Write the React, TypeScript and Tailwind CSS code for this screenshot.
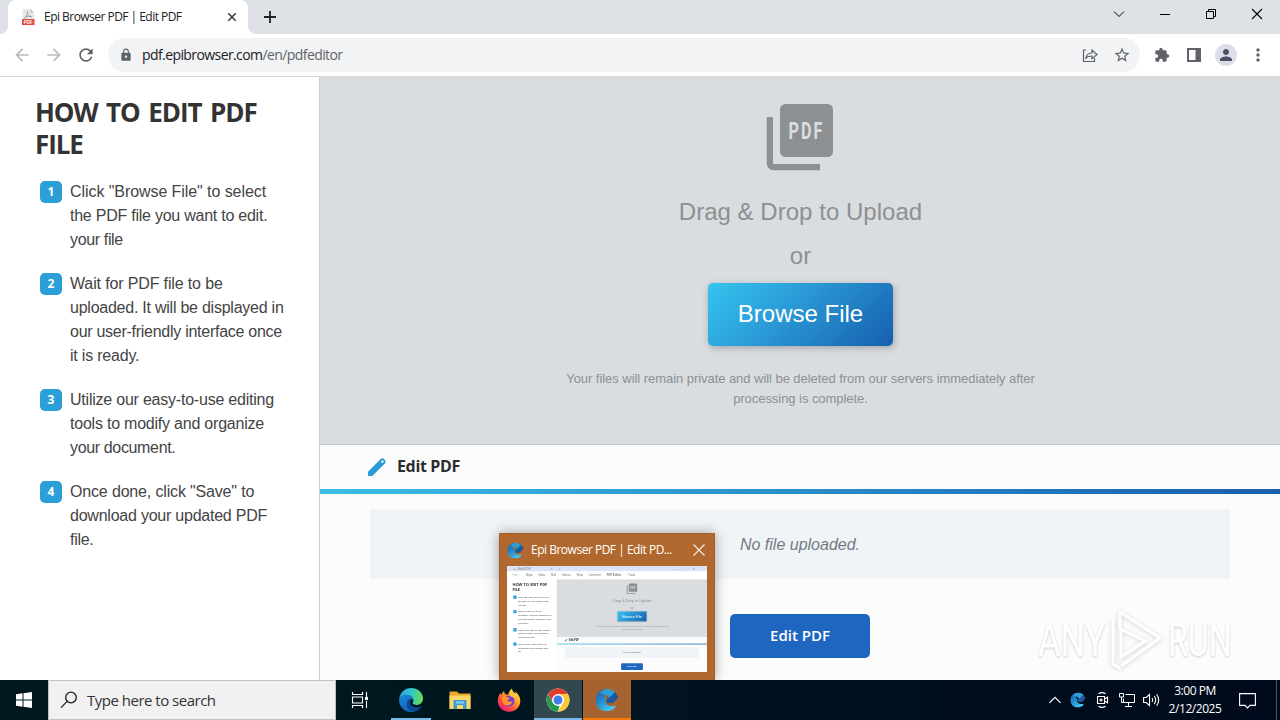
import { useId } from 'react';
import type { ReactNode } from 'react';
import clsx from 'clsx';
import {
  MdArrowBack,
  MdArrowForward,
  MdExtension,
  MdLock,
  MdMoreVert,
  MdPerson,
  MdRefresh,
  MdStarBorder,
} from 'react-icons/md';

interface StepLine {
  text: string;
  tracking: string;
}

const steps: StepLine[][] = [
  [
    { text: 'Click "Browse File" to select', tracking: 'tracking-[-0.07px]' },
    { text: 'the PDF file you want to edit.', tracking: 'tracking-[-0.24px]' },
    { text: 'your file', tracking: 'tracking-[-0.35px]' },
  ],
  [
    { text: 'Wait for PDF file to be', tracking: 'tracking-[-0.14px]' },
    { text: 'uploaded. It will be displayed in', tracking: 'tracking-[-0.24px]' },
    { text: 'our user-friendly interface once', tracking: 'tracking-[-0.27px]' },
    { text: 'it is ready.', tracking: 'tracking-[-0.2px]' },
  ],
  [
    { text: 'Utilize our easy-to-use editing', tracking: 'tracking-[-0.22px]' },
    { text: 'tools to modify and organize', tracking: 'tracking-[-0.22px]' },
    { text: 'your document.', tracking: 'tracking-[-0.35px]' },
  ],
  [
    { text: 'Once done, click "Save" to', tracking: 'tracking-[-0.16px]' },
    { text: 'download your updated PDF', tracking: 'tracking-[-0.23px]' },
    { text: 'file.', tracking: 'tracking-[-0.3px]' },
  ],
];

export default function App() {
  return (
    <div className="relative flex h-[720px] w-[1280px] flex-col overflow-hidden bg-white">
      <TabStrip />
      <Toolbar />
      <div className="h-[603px] shrink-0">
        <PdfEditorPage />
      </div>
      <Taskbar />
      <Watermark />
      <TaskPreview />
    </div>
  );
}

function TabStrip() {
  return (
    <div className="flex h-[34px] shrink-0 items-stretch bg-[#dee1e6] font-['Open_Sans','Noto_Sans',sans-serif] text-[#202124]">
      <div className="flex w-2 items-end overflow-hidden bg-white">
        <div className="h-full w-2 rounded-br-lg bg-[#dee1e6]" />
      </div>
      <div className="bg-white">
        <div className="h-2 w-full bg-[#dee1e6]">
          <div className="h-2 rounded-t-lg bg-white" />
        </div>
        <div className="-mt-2 flex h-[34px] w-[240px] items-center pr-[10px] pl-3">
          <PdfFileIcon />
          <span className="ml-2 flex-1 text-[12px] tracking-[-0.53px] whitespace-nowrap">Epi Browser PDF | Edit PDF</span>
          <svg width="12" height="12" viewBox="0 0 12 12" stroke="#3c4043" strokeWidth="1.6">
            <path d="M2.3 2.3l7.4 7.4M9.7 2.3L2.3 9.7" />
          </svg>
        </div>
      </div>
      <div className="w-2 bg-white">
        <div className="h-full w-2 rounded-bl-lg bg-[#dee1e6]" />
      </div>
      <svg className="mt-[10px] ml-[7px]" width="14" height="14" viewBox="0 0 14 14" stroke="#202124" strokeWidth="1.8">
        <path d="M7 1v12M1 7h12" />
      </svg>
      <div className="ml-auto flex items-center text-black">
        <svg width="46" height="28" viewBox="0 0 46 28" fill="none" stroke="currentColor">
          <path d="M18 8.500l5 5 5-5" />
        </svg>
        <svg width="46" height="28" viewBox="0 0 46 28" fill="none" stroke="currentColor">
          <path d="M18 11.5h10" />
        </svg>
        <svg width="46" height="28" viewBox="0 0 46 28" fill="none" stroke="currentColor">
          <path d="M18.500 8.500h7v7h-7zM20.500 8.500v-2h7v7h-2" />
        </svg>
        <svg width="46" height="28" viewBox="0 0 46 28" fill="none" stroke="currentColor" strokeWidth="1.1">
          <path d="M18 6l10 10M28 6L18 16" />
        </svg>
      </div>
    </div>
  );
}

function PdfFileIcon() {
  return (
    <svg width="16" height="16" viewBox="0 0 16 16">
      <path d="M2.500 0h8L14 3.500V16h-11.500z" fill="#e6e7e8" />
      <path d="M10.500 0v3.500H14z" fill="#c2c5c8" />
      <path d="M4.500 9c2-1 3.800-4.500 3-6.500-1 1 1 5.500 4.500 5.200-2-1-5.500 0-7.500 1.300z" fill="none" stroke="#9a9da0" strokeWidth=".9" />
      <rect x="2" y="10" width="12.500" height="6" fill="#e2483d" />
      <text x="8.300" y="14.700" fontSize="4.500" fontWeight="700" textAnchor="middle" fill="#fff" fontFamily="Liberation Sans">
        PDF
      </text>
    </svg>
  );
}

function Toolbar() {
  return (
    <div className="flex h-[43px] shrink-0 items-center border-b border-[#d5d8db] bg-white pl-[12px] text-[#5f6368]">
      <MdArrowBack size={20} className="text-[#b9bbbe]" />
      <MdArrowForward size={20} className="ml-3 text-[#b9bbbe]" />
      <MdRefresh size={20} className="ml-3" />
      <div className="ml-3 flex h-[34px] w-[1032px] items-center rounded-full bg-[#f1f3f4] pr-[10px] pl-[11px]">
        <MdLock size={14} />
        <span className="ml-[9px] pb-px font-['Open_Sans','Noto_Sans',sans-serif] text-[14px] tracking-[-0.59px] whitespace-nowrap text-[#5f6368]">
          <span className="text-[#202124]">pdf.epibrowser.com</span>/en/pdfeditor
        </span>
        <svg className="ml-auto" width="16" height="16" viewBox="0 0 16 16" fill="none" stroke="#5f6368" strokeWidth="1.200">
          <path d="M4 3H1.500v11.500h11V11M4 11c.5-3.500 2.500-5 6-5V3l5 4.500-5 4.200V9C7.500 9 5.500 9.500 4 11z" />
        </svg>
        <MdStarBorder size={18} className="-mr-[1px] ml-[15px]" />
      </div>
      <MdExtension size={16} className="mr-px ml-[14px]" />
      <svg className="ml-[15px]" width="16" height="16" viewBox="0 0 16 16">
        <path d="M1 1h14v14H1zM3 3v10h6.500V3z" fill="#5f6368" fillRule="evenodd" />
      </svg>
      <div className="ml-[13px] flex size-[22px] items-center justify-center rounded-full bg-[#dcdfe8] text-[#4b5065]">
        <MdPerson size={18} />
      </div>
      <MdMoreVert size={20} className="ml-[11px]" />
    </div>
  );
}

function PdfStackIcon() {
  return (
    <svg width="80" height="80" viewBox="0 0 80 80" fill="currentColor">
      <path d="M6.700 20H13v47h47v6.300H13.400a6.700 6.700 0 0 1-6.700-6.700z" />
      <rect x="20" y="7" width="53" height="53" rx="5.500" />
      <text
        x="28.500"
        y="42"
        fontSize="24"
        fontWeight="700"
        fontFamily="Roboto, 'Liberation Sans', sans-serif"
        textLength="36"
        lengthAdjust="spacingAndGlyphs"
        letterSpacing="3"
        fill="#d9dde0"
      >
        PDF
      </text>
    </svg>
  );
}

function PdfEditorPage() {
  return (
    <div className="flex h-[603px] w-[1280px] overflow-hidden bg-[#fcfcfd]">
      <aside className="w-[320px] shrink-0 border-r border-[#c9cdd0] bg-white pt-[19px] pl-[35px]">
        <h1 className="font-['Open_Sans','Noto_Sans',sans-serif] text-[26px] leading-[32px] font-bold tracking-[-1.1px] [word-spacing:3px] whitespace-nowrap text-[#333]">
          HOW TO EDIT PDF
          <br />
          FILE
        </h1>
        <ol className="mt-[19px] ml-[5px] space-y-5">
          {steps.map((lines, i) => (
            <li key={i} className="flex">
              <span className="mt-[2px] flex size-[22px] shrink-0 items-center justify-center rounded-[5px] bg-[#2a9fd8] pb-px font-['Open_Sans','Noto_Sans',sans-serif] text-[12px] font-bold text-white">
                {i + 1}
              </span>
              <p className="-mb-px ml-2 pt-px font-['Liberation_Sans',Arial,sans-serif] text-[16px] leading-6 whitespace-nowrap text-[#444]">
                {lines.map(line => (
                  <span key={line.text} className={clsx('block', line.tracking)}>
                    {line.text}
                  </span>
                ))}
              </p>
            </li>
          ))}
        </ol>
      </aside>

      <main className="flex flex-1 flex-col font-['Liberation_Sans',Arial,sans-serif]">
        <section className="flex h-[368px] shrink-0 flex-col items-center border-b border-[#c5cacf] bg-[#d9dde0] pt-[20px] text-[#8c9093]">
          <PdfStackIcon />
          <div className="mt-[21px] pl-px text-[24px] leading-7 tracking-[0.03px]">Drag &amp; Drop to Upload</div>
          <div className="mt-4 pl-px text-[24px] leading-7">or</div>
          <button className="mt-[13px] h-[63px] w-[185px] rounded-[5px] bg-linear-[135deg,#35c5ef,#2a97d4_45%,#165fae] pb-[2px] pl-px text-[24px] text-white shadow-[1px_2px_7px_rgba(0,0,0,0.25)]">
            Browse File
          </button>
          <p className="mt-[23px] pl-px text-center text-[13px] leading-5 tracking-[-0.05px] whitespace-nowrap">
            Your files will remain private and will be deleted from our servers immediately after
            <br />
            processing is complete.
          </p>
        </section>

        <div className="flex h-[44px] shrink-0 items-center pl-[47px] text-[#2b2b2b]">
          <svg width="20" height="20" viewBox="0 0 20 20">
            <path d="M1 19v-4.200L13.500 2.200q1.700-1.700 3.400-.2l1 1q1.700 1.700 0 3.400L5.300 19z" fill="#2a9bd7" />
            <circle cx="15.400" cy="4.600" r="1.200" fill="#fff" />
          </svg>
          <span className="ml-[10px] pb-[2px] font-['Open_Sans','Noto_Sans',sans-serif] text-[16px] font-bold tracking-[-0.35px]">Edit PDF</span>
        </div>
        <div className="h-[5px] shrink-0 bg-linear-to-r from-[#3bbde6] to-[#1b5fab]" />

        <div className="mx-[50px] mt-[15px] flex h-[70px] items-center justify-center bg-[#f1f4f7] pt-[2px] text-[16px] text-[#6f7a84] italic">
          No file uploaded.
        </div>
        <button className="mx-auto mt-[35px] h-[44px] w-[140px] rounded-[5px] bg-[#1f66c1] pb-[2px] font-['Open_Sans','Noto_Sans',sans-serif] text-[15px] font-semibold text-white">
          Edit PDF
        </button>
      </main>
    </div>
  );
}

function TaskPreview() {
  return (
    <div className="absolute top-[533px] left-[499px] h-[147px] w-[216px] border border-b-0 border-[#a25e28] bg-[#b0682e] shadow-[0_0_12px_rgba(0,0,0,0.35)] [clip-path:inset(-20px_-20px_0_-20px)]">
      <div className="flex h-8 items-center pr-[9px] pl-[7px]">
        <EpiLogo size={17} />
        <span className="ml-[7px] flex-1 font-['Open_Sans','Noto_Sans',sans-serif] text-[12px] tracking-[-0.49px] whitespace-nowrap text-white">
          Epi Browser PDF | Edit PD...
        </span>
        <svg width="12" height="12" viewBox="0 0 12 12" stroke="#f6e9df" strokeWidth="1.200">
          <path d="M.5.5l11 11M11.500.5l-11 11" />
        </svg>
      </div>
      <div className="ml-[7px] h-[106px] w-[200px] overflow-hidden bg-white">
        <div className="h-[680px] w-[1280px] origin-top-left scale-[0.15625]">
          <div className="flex h-[34px] items-center bg-[#dbe4f7] px-10 font-['Liberation_Sans',Arial,sans-serif] text-[20px] text-[#777]">
            <PdfFileIcon />
            <span className="ml-4">Edit PDF</span>
            <span className="ml-32">×</span>
            <span className="ml-10">+</span>
            <span className="ml-auto tracking-[40px]">–□×</span>
          </div>
          <div className="flex h-[51px] items-center gap-9 bg-white px-8 font-['Liberation_Sans',Arial,sans-serif] text-[18px] text-[#777]">
            <span>‹ › ↻ ⌂</span>
            <span>Maps</span>
            <span>News</span>
            <span>Mail</span>
            <span>Games</span>
            <span>Shop</span>
            <span>Converter</span>
            <span className="font-bold">PDF Editor</span>
            <span>• Tools</span>
          </div>
          <PdfEditorPage />
        </div>
      </div>
    </div>
  );
}

function Watermark() {
  return (
    <div className="absolute top-[606px] left-[1038px] flex h-[68px] items-center font-[Roboto,'Liberation_Sans',sans-serif] text-[46px] text-white [text-shadow:0_1px_3px_rgba(0,0,0,0.2)]">
      <span className="w-[68px] origin-left scale-x-[0.75]">ANY</span>
      <svg className="drop-shadow-[0_1px_2px_rgba(0,0,0,0.17)]" width="60" height="68" viewBox="0 0 60 68" fill="none" stroke="#fff" strokeWidth="3" strokeLinejoin="round">
        <path d="M14 6L54 32 15 60M14 6v17L39 35 15 51V23M7 13v45l8 5" />
      </svg>
      <span className="ml-[2px] w-[70px] origin-left scale-x-[0.7]">RUN</span>
    </div>
  );
}

function TaskButton({ active, underline, className, children }: { active?: boolean; underline?: string; className?: string; children: ReactNode }) {
  return (
    <div className={clsx('mr-px flex h-10 w-12 flex-col items-center', className)}>
      <div className="flex h-[38px] items-center pt-[2px]">{children}</div>
      {underline && <div className={clsx('h-[2px]', active ? 'w-full' : 'w-10', underline)} />}
    </div>
  );
}

function Taskbar() {
  return (
    <div className="flex h-10 shrink-0 bg-linear-to-r from-[#00171f] from-30% to-[#010a1c] font-['Open_Sans','Noto_Sans',sans-serif]">
      <div className="flex w-12 items-center justify-center">
        <svg width="16" height="16" viewBox="0 0 16 16" fill="#fff">
          <path d="M0 2.200L6.500 1.300V7.500H0zM7.500 1.200L16 0v7.500H7.500zM0 8.500h6.500v6.200L0 13.800zM7.500 8.500H16V16l-8.500-1.200z" />
        </svg>
      </div>
      <div className="flex w-[288px] items-center border border-[#bfc1c2] bg-[#f1f1f1] pl-[11px] text-[#333]">
        <svg width="18" height="18" viewBox="0 0 18 18" fill="none" stroke="#202020" strokeWidth="1.300">
          <circle cx="11" cy="6.500" r="5.300" />
          <path d="M7.200 10.400L1 16.600" />
        </svg>
        <span className="ml-[9px] text-[15px] tracking-[-0.5px]">Type here to search</span>
      </div>
      <TaskButton>
        <svg width="18" height="18" viewBox="0 0 18 18" fill="none" stroke="#fff" strokeWidth="1.100">
          <path d="M1.500 1v2.500h10V1M1.500 6h10v6h-10zM1.500 17v-2.500h10V17M15.500 1v5M15.500 10v7" />
          <rect x="14.500" y="6.500" width="2" height="2" fill="#fff" />
        </svg>
      </TaskButton>
      <div className="ml-[2px] flex">
        <TaskButton underline="bg-[#76b9ed]">
          <EdgeLogo />
        </TaskButton>
        <TaskButton>
          <FolderIcon />
        </TaskButton>
        <TaskButton>
          <FirefoxLogo />
        </TaskButton>
        <TaskButton active underline="bg-[#76b9ed]" className="bg-[#33474f]">
          <ChromeLogo />
        </TaskButton>
        <TaskButton active underline="bg-[#ff7600]" className="bg-[#a6632f]">
          <EpiLogo size={24} />
        </TaskButton>
      </div>
      <div className="ml-auto flex items-center text-white">
        <svg width="12" height="8" viewBox="0 0 12 8" fill="none" stroke="currentColor" strokeWidth="1.200">
          <path d="M.5 6.800L6 1.300l5.500 5.500" />
        </svg>
        <span className="ml-[9px]">
          <EpiLogo size={16} />
        </span>
        <svg className="ml-[10px]" width="14" height="18" viewBox="0 0 14 18" fill="none" stroke="currentColor" strokeWidth="1.100">
          <path d="M2.500 2.800Q6 .5 9.500 2.800M2.500 15.200Q6 17.500 9.500 15.200M1.500 5.500h7v7h-7zM8.500 8l3-1.800v5.600l-3-1.800" />
          <circle cx="5" cy="9" r="1" />
        </svg>
        <svg className="ml-[9px]" width="17" height="16" viewBox="0 0 17 16" fill="none" stroke="currentColor">
          <path d="M6.500 2.500h9v8h-11v-4M9.500 10.500v4M6 14.500h7M.5 1.500h4v3.500h-4zM2.500 5v5.500h2" />
        </svg>
        <svg className="ml-[7px]" width="17" height="16" viewBox="0 0 17 16" fill="none" stroke="currentColor" strokeWidth="1.100">
          <path d="M.6 5.500h2.500L6.500 2.500v11L3.100 10.500H.6zM9 6q1.400 2 0 4M11.300 4q2.800 4 0 8M13.600 2.200q4.200 5.800 0 11.600" />
        </svg>
        <div className="ml-[5px] w-[60px] text-center text-[12px] leading-[18px] tracking-[-0.45px] whitespace-nowrap">
          <div>3:00 PM</div>
          <div>2/12/2025</div>
        </div>
        <svg className="ml-[14px]" width="17" height="17" viewBox="0 0 17 17" fill="none" stroke="currentColor" strokeWidth="1.100">
          <path d="M.6 1.600h15.800v11.800H11L8.500 16 6 13.400H.6z" />
        </svg>
        <div className="ml-5 h-10 w-[4px] border-l border-[#4c5360]" />
      </div>
    </div>
  );
}

function EpiLogo({ size }: { size: number }) {
  const id = useId();
  return (
    <svg width={size} height={size} viewBox="0 0 24 24">
      <defs>
        <linearGradient id={id} x1="0" y1="0" x2="0.6" y2="1">
          <stop offset="0" stopColor="#1763a8" />
          <stop offset="0.5" stopColor="#2187c9" />
          <stop offset="1" stopColor="#43c6f2" />
        </linearGradient>
      </defs>
      <path d="M11 1C5 1 .8 6 .8 12.500.8 19 5 23 11 23c5 0 8.500-1.500 10-5.500-3 .8-6.500 1-8.500-.5-2.200-1.500-2.500-4-1-6L8.500 8z" fill={`url(#${id})`} />
      <path d="M5 5C9 2 17 1 20 4l3.500 5.500L18 15h-6c-1.300-2.600-.6-4.200 1.500-5C12 7 8 5.500 5 5z" fill="#1a5a9c" />
      <path d="M5 5.500C7.500.3 15-.6 20 4l-6 6C12.500 7.500 9 6 5 5.500z" fill="#2f9ed6" />
    </svg>
  );
}

function EdgeLogo() {
  const id = useId();
  return (
    <svg width="24" height="24" viewBox="0 0 24 24">
      <defs>
        <linearGradient id={`${id}a`} x1="0" y1="0.3" x2="1" y2="0.4">
          <stop offset="0" stopColor="#2aa6e4" />
          <stop offset="0.5" stopColor="#2fc5ca" />
          <stop offset="1" stopColor="#69dd55" />
        </linearGradient>
        <linearGradient id={`${id}b`} x1="0" y1="0" x2="0.5" y2="1">
          <stop offset="0" stopColor="#1a8bd8" />
          <stop offset="1" stopColor="#1160b7" />
        </linearGradient>
      </defs>
      <path d="M.2 11C1 4.500 6 0 12 0c7 0 12 5 12 10.500 0 4-3 6.500-6.500 6.500-3 0-4.500-1.200-3.600-2.400C16 11 12 7 8 7c-4 0-6.800 2-7.800 4z" fill={`url(#${id}a)`} />
      <path d="M.1 12C.5 9 4 6.500 8 6.800c3.500.2 6 2.600 6 5.200-3-2-6 0-6 4 0 4 4 7.500 8 7.500A12 12 0 0 1 .1 12z" fill={`url(#${id}b)`} />
      <path d="M8 14c-1.500 5 3 10 8 9.500 3.200-.8 5.500-3 6.500-5.300-5 2.800-10.500 1-11.300-3.200-.2-1.500.5-2.500 1.500-3C10.500 11.500 8.500 12.500 8 14z" fill="#0b4a92" />
    </svg>
  );
}

function FolderIcon() {
  return (
    <svg width="22" height="20" viewBox="0 0 22 20">
      <path d="M.5 1.500h7.500l2 2h11.500V19H.5z" fill="#e8a927" />
      <path d="M.5 5.500h21V19H.5z" fill="#fcd667" />
      <path d="M4.500 19v-8q0-1 1-1h11q1 0 1 1v8h-3.500v-4H8v4z" fill="#3d9bd8" />
      <path d="M7 11.500h8v2H7z" fill="#8fd0f2" />
    </svg>
  );
}

function FirefoxLogo() {
  const id = useId();
  return (
    <svg width="24" height="24" viewBox="0 0 24 24">
      <defs>
        <linearGradient id={id} x1="0.85" y1="0.1" x2="0.2" y2="0.95">
          <stop offset="0" stopColor="#ffe14a" />
          <stop offset="0.4" stopColor="#ff9a2a" />
          <stop offset="0.7" stopColor="#ff4a3d" />
          <stop offset="1" stopColor="#e8207c" />
        </linearGradient>
      </defs>
      <path d="M15 .5c0 2.500 1.800 3.500 3.400 5.200-.1-.8-.3-1.500-.7-2.200C21 5.500 23.300 9 23.300 13c0 6.200-5 10.700-11.200 10.700C5.700 23.700.8 19 .8 13c0-3.500 1.200-6.300 2.700-8.300L4 7l3-4.200.8 3L11 7c.5-2.500 2-5.200 4-6.500z" fill={`url(#${id})`} />
      <circle cx="12" cy="13" r="5.500" fill="#7a3bd6" />
      <path d="M5 9c2-1.300 4-.8 5.200.3l3 .5c-.3 1-2 1.300-2.700 2 .2 2.500 3.500 2.500 5 1.200-.5 3.500-3.500 5-6.300 4.300C6 16.500 4.500 13 5 9z" fill="#ff9427" />
      <path d="M12.500 5.500c3.500.3 5.500 2.500 5.800 5.500-1-1.500-2.500-2-4-2z" fill="#ffc83a" />
    </svg>
  );
}

function ChromeLogo() {
  return (
    <svg width="24" height="24" viewBox="0 0 48 48">
      <circle cx="24" cy="24" r="23" fill="#fff" />
      <path d="M24 1a23 23 0 0 1 19.900 11.500H24A11.500 11.500 0 0 0 14 29.800L4.100 12.500A23 23 0 0 1 24 1z" fill="#e33b2e" />
      <path d="M4.100 12.500L14 29.800a11.500 11.500 0 0 0 10 5.700c1 0 2 0 3-.4L24 47A23 23 0 0 1 4.100 12.500z" fill="#249b4a" />
      <path d="M43.900 12.500A23 23 0 0 1 24 47l10-17.200a11.500 11.500 0 0 0-1.300-13.300L24 12.500z" fill="#fcc934" />
      <circle cx="24" cy="24" r="11.500" fill="#fff" />
      <circle cx="24" cy="24" r="9" fill="#3f7de8" />
    </svg>
  );
}
